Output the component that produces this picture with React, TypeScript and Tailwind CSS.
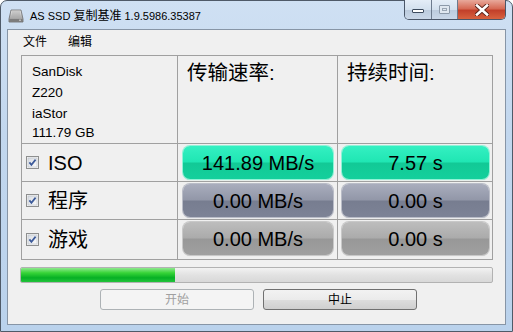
import React from 'react';

const FONT = "font-['Liberation_Sans','Noto_Sans_CJK_SC',sans-serif]";

interface ResultRow {
  label: string;
  rate: string;
  time: string;
  tone: 'green' | 'blue' | 'gray';
}

const rows: ResultRow[] = [
  { label: 'ISO', rate: '141.89 MB/s', time: '7.57 s', tone: 'green' },
  { label: '程序', rate: '0.00 MB/s', time: '0.00 s', tone: 'blue' },
  { label: '游戏', rate: '0.00 MB/s', time: '0.00 s', tone: 'gray' },
];

const pillTone = {
  green:
    'bg-[linear-gradient(to_bottom,#34f0c2_0%,#20e6b3_48%,#12c996_52%,#14d09c_100%)] shadow-[0_0_0_1px_#8ff3d7,0_1px_1px_#9bd9c4]',
  blue:
    'bg-[linear-gradient(to_bottom,#a9adbd_0%,#9297a8_48%,#777d90_52%,#7d8396_100%)] shadow-[0_0_0_1px_#b9bcc7,0_1px_1px_#c4c6ce]',
  gray:
    'bg-[linear-gradient(to_bottom,#bdbdbd_0%,#ababab_48%,#989898_52%,#a0a0a0_100%)] shadow-[0_0_0_1px_#c8c8c8,0_1px_1px_#cfcfcf]',
};

const Pill: React.FC<{ text: string; tone: ResultRow['tone'] }> = ({ text, tone }) => (
  <div
    className={`flex h-[33px] items-center justify-center rounded-[7px] text-[20px] text-black ${pillTone[tone]}`}
  >
    {text}
  </div>
);

const CheckBox = () => (
  <svg width="13" height="13" viewBox="0 0 13 13" className="shrink-0">
    <defs>
      <linearGradient id="cbg" x1="0" y1="0" x2="1" y2="1">
        <stop offset="0" stopColor="#d8dce2" />
        <stop offset="1" stopColor="#fbfbfb" />
      </linearGradient>
    </defs>
    <rect x="0.5" y="0.5" width="12" height="12" fill="#f4f4f4" stroke="#8e8f8f" />
    <rect x="2" y="2" width="9" height="9" fill="url(#cbg)" stroke="#b8bfc8" strokeWidth="0.6" />
    <path d="M3.4 6.4 L5.4 8.8 L9.6 3.6" fill="none" stroke="#3c5a9a" strokeWidth="1.7" />
  </svg>
);

const DriveIcon = () => (
  <svg width="16" height="16" viewBox="0 0 16 16">
    <defs>
      <linearGradient id="dg" x1="0" y1="0" x2="0" y2="1">
        <stop offset="0" stopColor="#e8e8e8" />
        <stop offset="1" stopColor="#8a8a8a" />
      </linearGradient>
    </defs>
    <path d="M3 2 H13 L15 11 V14 H1 V11 Z" fill="url(#dg)" stroke="#6b6b6b" strokeWidth="0.8" />
    <path d="M4 4 H12 M4 6 H12 M3.5 8 H12.5" stroke="#a9a9a9" strokeWidth="0.8" />
    <rect x="1.5" y="11" width="13" height="2.5" fill="#7d7d7d" />
    <rect x="11" y="11.7" width="2" height="1" fill="#d8d8d8" />
  </svg>
);

export default function App() {
  return (
    <div
      className={`${FONT} flex h-[332px] w-[513px] flex-col rounded-t-[7px] border border-[#4f5a68] bg-[linear-gradient(to_bottom,#cfe0f3_0%,#c2d7ee_40%,#bad2ec_100%)] px-[6px] pb-[6px]`}
    >
      {/* Title bar */}
      <div className="relative flex h-[28px] items-center">
        <div className="ml-[1px] mt-[1px]">
          <DriveIcon />
        </div>
        <span className="ml-[6px] mt-[1px] text-[11px] text-black">
          AS SSD <span className="text-[12px]">复制基准</span> 1.9.5986.35387
        </span>
        <div className="absolute right-[0px] top-[-1px] flex h-[20px] overflow-hidden rounded-b-[5px] border border-t-0 border-[#4a5668]">
          <div className="flex w-[27px] items-center justify-center border-r border-[#6d7b8e] bg-[linear-gradient(to_bottom,#e4edf7_0%,#d3e0ee_50%,#bccbdd_52%,#c9d7e8_100%)]">
            <div className="mt-[3px] h-[4px] w-[12px] rounded-[1px] border border-[#3d4b5e] bg-white" />
          </div>
          <div className="flex w-[26px] items-center justify-center border-r border-[#6d7b8e] bg-[linear-gradient(to_bottom,#e4edf7_0%,#d3e0ee_50%,#bccbdd_52%,#c9d7e8_100%)]">
            <div className="flex h-[9px] w-[11px] items-center justify-center rounded-[1px] border border-[#8c99a9] bg-[#dfe7f0]">
              <div className="h-[3px] w-[5px] border border-[#9aa6b4]" />
            </div>
          </div>
          <div className="flex w-[47px] items-center justify-center bg-[linear-gradient(to_bottom,#e8a99b_0%,#d66a55_45%,#c2402a_55%,#d8623f_100%)]">
            <svg width="14" height="12" viewBox="0 0 14 12">
              <path d="M2 1.5 L12 10.5 M12 1.5 L2 10.5" stroke="#5a2219" strokeWidth="4.4" strokeLinecap="square" />
              <path d="M2 1.5 L12 10.5 M12 1.5 L2 10.5" stroke="#ffffff" strokeWidth="2.6" strokeLinecap="square" />
            </svg>
          </div>
        </div>
      </div>

      {/* Client area */}
      <div className="flex flex-1 flex-col border border-[#8795a6] bg-[#f0f0f0]">
        {/* Menu */}
        <div className="flex h-[22px] items-center gap-[21px] pl-[15px] pt-[2px] text-[12px] text-black">
          <span>文件</span>
          <span>编辑</span>
        </div>

        {/* Results table */}
        <div className="ml-[13px] mt-[3px] w-[472px] border border-[#a0a0a0]">
          <div className="grid grid-cols-[156px_160px_154px]">
            <div className="flex h-[88px] flex-col border-b border-r border-[#a0a0a0] pl-[10px] pt-[5px] text-[13.5px] leading-[21px] text-black">
              <span>SanDisk</span>
              <span>Z220</span>
              <span>iaStor</span>
              <span className="leading-[17px]">111.79 GB</span>
            </div>
            <div className="h-[88px] border-b border-r border-[#a0a0a0] pl-[9px] pt-[2px] text-[20.5px] text-black">
              传输速率:
            </div>
            <div className="h-[88px] border-b border-[#a0a0a0] pl-[9px] pt-[2px] text-[20.5px] text-black">
              持续时间:
            </div>

            {rows.map((row, i) => {
              const last = i === rows.length - 1;
              const h = i === 2 ? 'h-[39px]' : 'h-[38px]';
              const bb = last ? '' : 'border-b';
              return (
                <React.Fragment key={row.label}>
                  <div className={`flex ${h} items-center gap-[9px] ${bb} border-r border-[#a0a0a0] pl-[4px]`}>
                    <CheckBox />
                    <span className="text-[20px] text-black">{row.label}</span>
                  </div>
                  <div className={`${h} ${bb} border-r border-[#a0a0a0] pl-[5px] pr-[4px] pt-[2px]`}>
                    <Pill text={row.rate} tone={row.tone} />
                  </div>
                  <div className={`${h} ${bb} border-[#a0a0a0] pl-[4px] pr-[3px] pt-[2px]`}>
                    <Pill text={row.time} tone={row.tone} />
                  </div>
                </React.Fragment>
              );
            })}
          </div>
        </div>

        {/* Progress bar */}
        <div className="ml-[12px] mt-[7px] h-[16px] w-[473px] overflow-hidden rounded-[2px] border border-[#b2b2b2] bg-[linear-gradient(to_bottom,#f2f2f2_0%,#e2e2e2_50%,#d8d8d8_100%)]">
          <div className="h-full w-[154px] bg-[linear-gradient(to_bottom,#8ee88e_0%,#37d437_35%,#06b025_70%,#22c43c_100%)]" />
        </div>

        {/* Buttons */}
        <div className="ml-[92px] mt-[6px] flex gap-[9px] text-[12px]">
          <div className="flex h-[21px] w-[154px] items-center justify-center rounded-[3px] border border-[#adb2b5] bg-[#f4f4f4] text-[#a0a0a0]">
            开始
          </div>
          <div className="flex h-[21px] w-[154px] items-center justify-center rounded-[3px] border border-[#707070] bg-[linear-gradient(to_bottom,#f2f2f2_0%,#ebebeb_50%,#dddddd_52%,#cfcfcf_100%)] text-black">
            中止
          </div>
        </div>
      </div>
    </div>
  );
}
